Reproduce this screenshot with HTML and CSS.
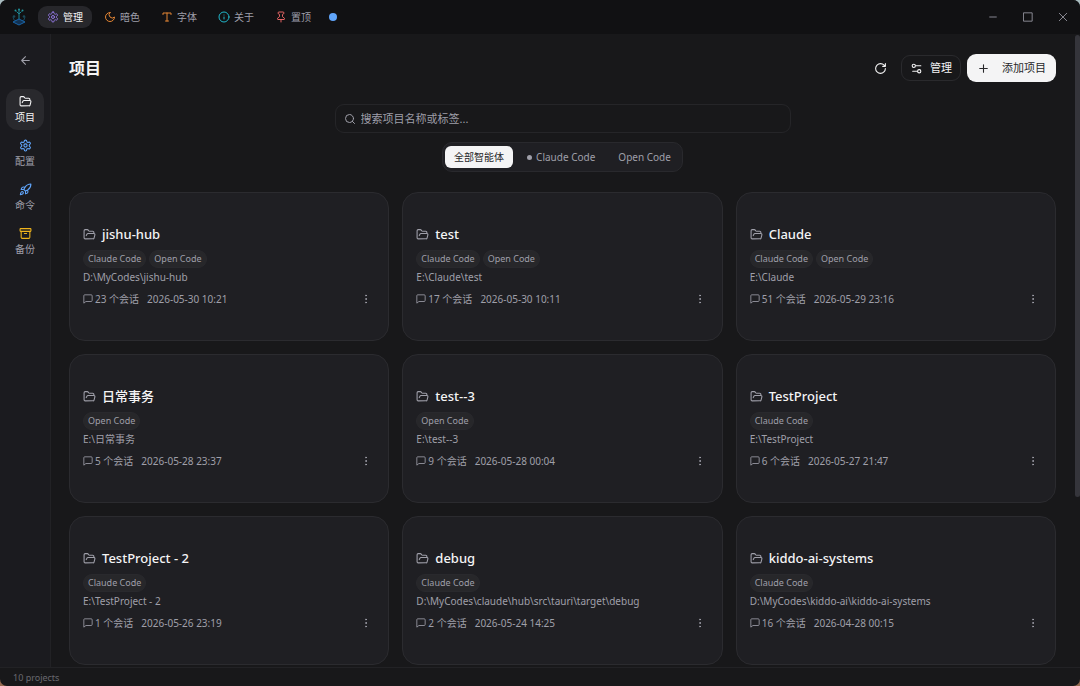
FILE: index.html
```
<!DOCTYPE html>
<html lang="zh-CN">
<head>
<meta charset="utf-8">
<title>项目</title>
<link rel="stylesheet" href="styles.css">
</head>
<body>
<svg class="sprite" aria-hidden="true">
  <symbol id="gear" viewBox="0 0 24 24"><path d="M12.22 2h-.44a2 2 0 0 0-2 2v.18a2 2 0 0 1-1 1.73l-.43.25a2 2 0 0 1-2 0l-.15-.08a2 2 0 0 0-2.73.73l-.22.38a2 2 0 0 0 .73 2.73l.15.1a2 2 0 0 1 1 1.72v.51a2 2 0 0 1-1 1.74l-.15.09a2 2 0 0 0-.73 2.73l.22.38a2 2 0 0 0 2.73.73l.15-.08a2 2 0 0 1 2 0l.43.25a2 2 0 0 1 1 1.73V20a2 2 0 0 0 2 2h.44a2 2 0 0 0 2-2v-.18a2 2 0 0 1 1-1.73l.43-.25a2 2 0 0 1 2 0l.15.08a2 2 0 0 0 2.73-.73l.22-.39a2 2 0 0 0-.73-2.73l-.15-.08a2 2 0 0 1-1-1.74v-.5a2 2 0 0 1 1-1.74l.15-.09a2 2 0 0 0 .73-2.73l-.22-.38a2 2 0 0 0-2.73-.73l-.15.08a2 2 0 0 1-2 0l-.43-.25a2 2 0 0 1-1-1.73V4a2 2 0 0 0-2-2z"/><circle cx="12" cy="12" r="3"/></symbol>
  <symbol id="moon" viewBox="0 0 24 24"><path d="M12 3a6 6 0 0 0 9 9 9 9 0 1 1-9-9Z"/></symbol>
  <symbol id="type" viewBox="0 0 24 24"><path d="M4 7V4h16v3M9 20h6M12 4v16"/></symbol>
  <symbol id="info" viewBox="0 0 24 24"><circle cx="12" cy="12" r="10"/><path d="M12 16v-4M12 8h.01"/></symbol>
  <symbol id="pin" viewBox="0 0 24 24"><path d="M12 17v5M9 10.76a2 2 0 0 1-1.11 1.79l-1.78.9A2 2 0 0 0 5 15.24V16a1 1 0 0 0 1 1h12a1 1 0 0 0 1-1v-.76a2 2 0 0 0-1.11-1.79l-1.78-.9A2 2 0 0 1 15 10.76V7a1 1 0 0 1 1-1 2 2 0 0 0 0-4H8a2 2 0 0 0 0 4 1 1 0 0 1 1 1z"/></symbol>
  <symbol id="back" viewBox="0 0 24 24"><path d="m12 19-7-7 7-7M19 12H5"/></symbol>
  <symbol id="folder" viewBox="0 0 24 24"><path d="m6 14 1.5-2.9A2 2 0 0 1 9.24 10H20a2 2 0 0 1 1.94 2.5l-1.54 6a2 2 0 0 1-1.95 1.5H4a2 2 0 0 1-2-2V5a2 2 0 0 1 2-2h3.9a2 2 0 0 1 1.69.9l.81 1.2a2 2 0 0 0 1.67.9H18a2 2 0 0 1 2 2v2"/></symbol>
  <symbol id="rocket" viewBox="0 0 24 24"><path d="M4.5 16.5c-1.5 1.26-2 5-2 5s3.74-.5 5-2c.71-.84.7-2.13-.09-2.91a2.18 2.18 0 0 0-2.91-.09zM12 15l-3-3a22 22 0 0 1 2-3.95A12.88 12.88 0 0 1 22 2c0 2.72-.78 7.5-6 11a22.35 22.35 0 0 1-4 2zM9 12H4s.55-3.03 2-4c1.62-1.08 5 0 5 0M12 15v5s3.03-.55 4-2c1.08-1.62 0-5 0-5"/></symbol>
  <symbol id="archive" viewBox="0 0 24 24"><rect x="2" y="3" width="20" height="5" rx="1"/><path d="M4 8v11a2 2 0 0 0 2 2h12a2 2 0 0 0 2-2V8M10 12h4"/></symbol>
  <symbol id="refresh" viewBox="0 0 24 24"><path d="M21 12a9 9 0 1 1-9-9c2.52 0 4.93 1 6.74 2.74L21 8M21 3v5h-5"/></symbol>
  <symbol id="sliders" viewBox="0 0 24 24"><path d="M20 7h-9M14 17H5"/><circle cx="17" cy="17" r="3"/><circle cx="7" cy="7" r="3"/></symbol>
  <symbol id="plus" viewBox="0 0 24 24"><path d="M5 12h14M12 5v14"/></symbol>
  <symbol id="search" viewBox="0 0 24 24"><circle cx="11" cy="11" r="8"/><path d="m21 21-4.3-4.3"/></symbol>
  <symbol id="chat" viewBox="0 0 24 24"><path d="M22 16a2 2 0 0 1-2 2H7l-5 4V4a2 2 0 0 1 2-2h16a2 2 0 0 1 2 2z"/></symbol>
  <symbol id="more" viewBox="0 0 24 24"><circle cx="12" cy="12" r="1"/><circle cx="12" cy="5" r="1"/><circle cx="12" cy="19" r="1"/></symbol>
  <symbol id="min" viewBox="0 0 24 24"><path d="M4 12h16"/></symbol>
  <symbol id="max" viewBox="0 0 24 24"><path d="M2 2h20v20H2z"/></symbol>
  <symbol id="close" viewBox="0 0 24 24"><path d="m3 3 18 18M21 3 3 21"/></symbol>
</svg>
<div class="window">
  <header class="titlebar">
    <svg class="logo" viewBox="0 0 16 18" aria-hidden="true">
      <g fill="none" stroke="#1c8793" stroke-width="1"><path d="M8 2v10M8 6 5.500 3.500M8 6l2.500-2.500"/><path stroke="#17475a" d="M2 9l1 3 3 1M14 9l-1 3-3 1"/></g>
      <g fill="#1f959e"><circle cx="8" cy="1.500" r="1"/><circle cx="4.500" cy="2.500" r="1"/><circle cx="11.500" cy="2.500" r="1"/></g>
      <g fill="#1b4a5a"><circle cx="3" cy="8.500" r="1.300"/><circle cx="13" cy="8.500" r="1.300"/></g>
      <path d="m8 11 6 3-6 3-6-3z" fill="#123253" stroke="#1a64a8"/>
    </svg>
    <nav class="tabs">
      <button class="tab active"><svg class="icon violet"><use href="#gear"/></svg>管理</button>
      <button class="tab"><svg class="icon orange"><use href="#moon"/></svg>暗色</button>
      <button class="tab"><svg class="icon orange"><use href="#type"/></svg>字体</button>
      <button class="tab"><svg class="icon cyan"><use href="#info"/></svg>关于</button>
      <button class="tab"><svg class="icon red"><use href="#pin"/></svg>置顶</button>
    </nav>
    <span class="status-dot"></span>
    <div class="controls">
      <button aria-label="最小化"><svg class="icon small"><use href="#min"/></svg></button>
      <button aria-label="最大化"><svg class="icon small"><use href="#max"/></svg></button>
      <button aria-label="关闭"><svg class="icon small"><use href="#close"/></svg></button>
    </div>
  </header>
  <div class="body">
    <aside class="sidebar">
      <button class="back" aria-label="返回"><svg class="icon large"><use href="#back"/></svg></button>
      <nav class="side-nav">
        <a class="side-link active" href="#projects"><svg class="icon large"><use href="#folder"/></svg>项目</a>
        <a class="side-link" href="#config"><svg class="icon large blue"><use href="#gear"/></svg>配置</a>
        <a class="side-link" href="#commands"><svg class="icon large blue"><use href="#rocket"/></svg>命令</a>
        <a class="side-link" href="#backup"><svg class="icon large yellow"><use href="#archive"/></svg>备份</a>
      </nav>
    </aside>
    <main class="main">
      <div class="page-head">
        <h1>项目</h1>
        <div class="actions">
          <button class="refresh" aria-label="刷新"><svg class="icon large"><use href="#refresh"/></svg></button>
          <button class="manage"><svg class="icon large"><use href="#sliders"/></svg>管理</button>
          <button class="add"><svg class="icon large"><use href="#plus"/></svg>添加项目</button>
        </div>
      </div>
      <label class="search"><svg class="icon"><use href="#search"/></svg><input type="text" aria-label="搜索项目" placeholder="搜索项目名称或标签..."></label>
      <div class="filters">
        <button class="filter active">全部智能体</button>
        <button class="filter"><span class="dot"></span>Claude Code</button>
        <button class="filter">Open Code</button>
      </div>
      <section class="grid">
        <article class="card"><h2><svg class="icon large"><use href="#folder"/></svg>jishu-hub</h2><div class="tags"><span>Claude Code</span><span>Open Code</span></div><p class="path">D:\MyCodes\jishu-hub</p><div class="meta"><svg class="icon small"><use href="#chat"/></svg><span>23 个会话</span><time>2026-05-30 10:21</time><button aria-label="更多"><svg class="icon"><use href="#more"/></svg></button></div></article>
        <article class="card"><h2><svg class="icon large"><use href="#folder"/></svg>test</h2><div class="tags"><span>Claude Code</span><span>Open Code</span></div><p class="path">E:\Claude\test</p><div class="meta"><svg class="icon small"><use href="#chat"/></svg><span>17 个会话</span><time>2026-05-30 10:11</time><button aria-label="更多"><svg class="icon"><use href="#more"/></svg></button></div></article>
        <article class="card"><h2><svg class="icon large"><use href="#folder"/></svg>Claude</h2><div class="tags"><span>Claude Code</span><span>Open Code</span></div><p class="path">E:\Claude</p><div class="meta"><svg class="icon small"><use href="#chat"/></svg><span>51 个会话</span><time>2026-05-29 23:16</time><button aria-label="更多"><svg class="icon"><use href="#more"/></svg></button></div></article>
        <article class="card"><h2><svg class="icon large"><use href="#folder"/></svg>日常事务</h2><div class="tags"><span>Open Code</span></div><p class="path">E:\日常事务</p><div class="meta"><svg class="icon small"><use href="#chat"/></svg><span>5 个会话</span><time>2026-05-28 23:37</time><button aria-label="更多"><svg class="icon"><use href="#more"/></svg></button></div></article>
        <article class="card"><h2><svg class="icon large"><use href="#folder"/></svg>test--3</h2><div class="tags"><span>Open Code</span></div><p class="path">E:\test--3</p><div class="meta"><svg class="icon small"><use href="#chat"/></svg><span>9 个会话</span><time>2026-05-28 00:04</time><button aria-label="更多"><svg class="icon"><use href="#more"/></svg></button></div></article>
        <article class="card"><h2><svg class="icon large"><use href="#folder"/></svg>TestProject</h2><div class="tags"><span>Claude Code</span></div><p class="path">E:\TestProject</p><div class="meta"><svg class="icon small"><use href="#chat"/></svg><span>6 个会话</span><time>2026-05-27 21:47</time><button aria-label="更多"><svg class="icon"><use href="#more"/></svg></button></div></article>
        <article class="card"><h2><svg class="icon large"><use href="#folder"/></svg>TestProject - 2</h2><div class="tags"><span>Claude Code</span></div><p class="path">E:\TestProject - 2</p><div class="meta"><svg class="icon small"><use href="#chat"/></svg><span>1 个会话</span><time>2026-05-26 23:19</time><button aria-label="更多"><svg class="icon"><use href="#more"/></svg></button></div></article>
        <article class="card"><h2><svg class="icon large"><use href="#folder"/></svg>debug</h2><div class="tags"><span>Claude Code</span></div><p class="path">D:\MyCodes\claude\hub\src\tauri\target\debug</p><div class="meta"><svg class="icon small"><use href="#chat"/></svg><span>2 个会话</span><time>2026-05-24 14:25</time><button aria-label="更多"><svg class="icon"><use href="#more"/></svg></button></div></article>
        <article class="card"><h2><svg class="icon large"><use href="#folder"/></svg>kiddo-ai-systems</h2><div class="tags"><span>Claude Code</span></div><p class="path">D:\MyCodes\kiddo-ai\kiddo-ai-systems</p><div class="meta"><svg class="icon small"><use href="#chat"/></svg><span>16 个会话</span><time>2026-04-28 00:15</time><button aria-label="更多"><svg class="icon"><use href="#more"/></svg></button></div></article>
      </section>
      <div class="scroll-thumb"></div>
    </main>
  </div>
  <footer class="statusbar">10 projects</footer>
</div>
</body>
</html>
```
FILE: styles.css
```
* { box-sizing: border-box; }
body {
  margin: 0;
  background: linear-gradient(#a9bcc0 50%, #94694f 50%);
  color: #9f9fa9;
  font: 10px/16px "Noto Sans", "Noto Sans CJK SC", sans-serif;
}
button, input { font: inherit; color: inherit; background: none; border: 0; padding: 0; margin: 0; }
a { color: inherit; text-decoration: none; }
h1, h2, p { margin: 0; }
.sprite { display: none; }
.window {
  height: 100vh;
  display: flex;
  flex-direction: column;
  background: #18181a;
  border-radius: 7px;
  overflow: hidden;
}
.icon {
  width: 12px;
  height: 12px;
  flex: none;
  fill: none;
  stroke: currentColor;
  stroke-width: 2;
  stroke-linecap: round;
  stroke-linejoin: round;
}
.icon.small { width: 10px; height: 10px; }
.icon.large { width: 13px; height: 13px; }
.violet { color: #9378e2; }
.orange { color: #e38534; }
.cyan { color: #22b8cb; }
.red { color: #e56565; }
.blue { color: #60a5fa; }
.yellow { color: #f0b41c; }

.titlebar {
  height: 34px;
  flex: none;
  display: flex;
  align-items: center;
  padding: 0 12px 0 11px;
  background: #111113;
}
.logo { width: 16px; height: 18px; margin-right: 11px; }
.tabs { display: flex; gap: 3px; }
.tab {
  height: 22px;
  padding: 0 9px;
  border-radius: 9px;
  display: flex;
  align-items: center;
  gap: 4px;
}
.tab.active { background: #27272b; color: #f4f4f5; }
.status-dot { width: 8px; height: 8px; border-radius: 50%; background: #60a5fa; margin-left: 9px; }
.controls { margin-left: auto; display: flex; gap: 25px; }
.controls button { display: flex; }

.body { flex: 1; min-height: 0; display: flex; }
.sidebar {
  width: 51px;
  flex: none;
  padding: 20px 6px;
  background: #1b1b1f;
  border-right: 1px solid #222225;
  display: flex;
  flex-direction: column;
  align-items: center;
}
.back { display: flex; margin-bottom: 22px; }
.side-nav { display: flex; flex-direction: column; gap: 3px; }
.side-link {
  width: 38px;
  height: 41px;
  border-radius: 12px;
  display: flex;
  flex-direction: column;
  align-items: center;
  justify-content: center;
  gap: 1px;
}
.side-link.active { background: #29292d; color: #f4f4f5; }

.main {
  position: relative;
  flex: 1;
  min-width: 0;
  overflow: hidden;
  padding: 20px 24px 0 18px;
  display: flex;
  flex-direction: column;
}
.page-head { display: flex; justify-content: space-between; align-items: center; }
h1 { font-size: 16px; line-height: 24px; font-weight: 700; color: #f4f4f5; }
.actions { display: flex; align-items: center; gap: 6px; font-size: 11px; color: #f4f4f5; }
.actions button { display: flex; align-items: center; }
.refresh { margin-right: 8px; }
.manage { height: 26px; padding: 0 8px; gap: 7px; border: 1px solid #2a2a2d; border-radius: 9px; }
.add { height: 28px; padding: 0 10px; gap: 12px; border-radius: 9px; background: #f4f4f5; color: #27272a; }

.search {
  width: 456px;
  max-width: 100%;
  height: 29px;
  margin: 22px auto 9px;
  padding: 0 8px;
  border: 1px solid #252528;
  border-radius: 9px;
  display: flex;
  align-items: center;
  gap: 5px;
  font-size: 11px;
}
.search input { flex: 1; min-width: 0; outline: 0; }
.search input::placeholder { color: #9f9fa9; opacity: 1; }
.filters {
  align-self: center;
  height: 30px;
  display: flex;
  align-items: center;
  gap: 5px;
  padding: 2px;
  border: 1px solid #29292d;
  border-radius: 10px;
  background: #1f1f23;
}
.filter { height: 22px; padding: 0 9px; border-radius: 6px; display: flex; align-items: center; gap: 4px; }
.filter.active { background: #f4f4f5; color: #27272a; }
.dot { width: 5px; height: 5px; border-radius: 50%; background: #9f9fa9; }

.grid {
  display: grid;
  grid-template-columns: repeat(3, minmax(0, 1fr));
  gap: 13px;
  margin-top: 20px;
}
.card {
  min-height: 149px;
  padding: 31px 13px;
  border: 1px solid #2b2b2f;
  border-radius: 16px;
  background: #1f1f23;
}
h2 {
  display: flex;
  align-items: center;
  gap: 6px;
  font-size: 13px;
  line-height: 20px;
  font-weight: 500;
  color: #f4f4f5;
}
h2 .icon { color: #9f9fa9; }
.tags { display: flex; gap: 3px; margin-top: 6px; font-size: 9px; }
.tags span { padding: 0 4px; border: 1px solid #29292d; border-radius: 9px; background: #27272a; }
.path { line-height: 18px; white-space: nowrap; overflow: hidden; text-overflow: ellipsis; }
.meta { display: flex; align-items: center; gap: 2px; margin-top: 5px; }
.meta time { margin-left: 6px; }
.meta button { display: flex; margin-left: auto; margin-right: 3px; }
.scroll-thumb {
  position: absolute;
  top: 1px;
  right: 0;
  width: 5px;
  height: 73%;
  border-radius: 3px;
  background: #35353b;
}
.statusbar {
  height: 19px;
  flex: none;
  padding: 2px 13px;
  border-top: 1px solid #222225;
  font-size: 9px;
  color: #68686f;
}
```
